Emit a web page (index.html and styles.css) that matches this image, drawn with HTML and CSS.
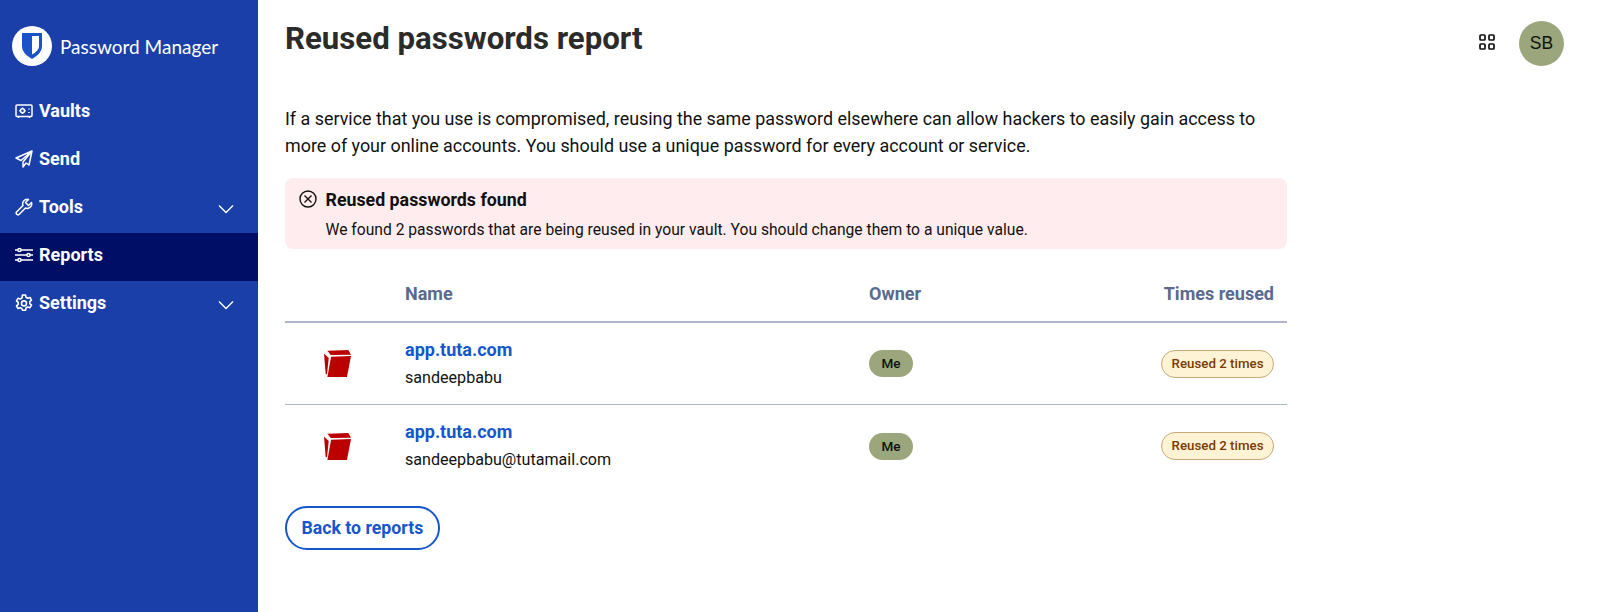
FILE: index.html
```html
<!DOCTYPE html>
<html lang="en">
<head>
    <meta charset="utf-8"/>
    <title>Reused passwords report</title>
    <link rel="stylesheet" href="styles.css">
</head>
<body>
<nav class="sidebar">
    <div class="sidebar__logo">
        <span class="logo_circle">
            <svg width="20" height="26" viewBox="0 0 20 26"><path d="M0 0h20v13c0 6-5 10-10 13C5 23 0 19 0 13z" fill="#1a52c8"/><path d="M10 3h7v10c0 4-3.500 6.500-7 8.500z" fill="#fff"/></svg>
        </span>
        <span class="logo_text">Password Manager</span>
    </div>
    <a class="nav_item">
        <span class="nav_label">
            <svg class="nav_icon" viewBox="0 0 18 18" fill="none" stroke="#fff" stroke-width="1.500"><rect x="1" y="3" width="16" height="11.500" rx="1"/><circle cx="7.500" cy="8.750" r="2"/><path d="M7.500 5.500v1.200M7.500 10.800V12M4.300 8.750h1.200M9.500 8.750h1.200M14 6.500v1M14 10v1M3.500 14.500V16M14.500 14.500V16"/></svg>
            Vaults
        </span>
    </a>
    <a class="nav_item">
        <span class="nav_label">
            <svg class="nav_icon" viewBox="0 0 18 18" fill="none" stroke="#fff" stroke-width="1.500"><path d="M17 1 1 8l5 2.500L17 1 8 12v5l3-4 3 2z" stroke-linejoin="round"/></svg>
            Send
        </span>
    </a>
    <a class="nav_item">
        <span class="nav_label">
            <svg class="nav_icon" viewBox="0 0 18 18" fill="none" stroke="#fff" stroke-width="1.500"><path d="M16.500 4.500 13.500 7.500 10.500 4.500 13.500 1.500a4.500 4.500 0 0 0-5.500 6L1.500 14a1.800 1.800 0 0 0 2.500 2.500L10.500 10a4.500 4.500 0 0 0 6-5.500z" stroke-linejoin="round"/></svg>
            Tools
        </span>
        <svg class="nav_chevron" viewBox="0 0 16 10" fill="none" stroke="#fff" stroke-width="1.400"><path d="m1 1.500 7 7 7-7"/></svg>
    </a>
    <a class="nav_item nav_item--active">
        <span class="nav_label">
            <svg class="nav_icon" viewBox="0 0 18 18" fill="none" stroke="#fff" stroke-width="1.500"><path d="M0 4h18M0 9h18M0 14h18"/><circle cx="4.500" cy="4" r="1.600" fill="#000e66"/><circle cx="13.500" cy="9" r="1.600" fill="#000e66"/><circle cx="4.500" cy="14" r="1.600" fill="#000e66"/></svg>
            Reports
        </span>
    </a>
    <a class="nav_item">
        <span class="nav_label">
            <svg class="nav_icon" viewBox="0 0 18 18" fill="none" stroke="#fff" stroke-width="1.600"><path d="M7.500 1h3l.5 2.200 1.800 1 2.200-.7 1.500 2.600-1.700 1.500v2l1.700 1.500-1.500 2.600-2.200-.7-1.800 1-.5 2.200h-3L7 14.800l-1.800-1-2.200.7-1.500-2.600L3.200 10.400v-2L1.500 6.900 3 4.300l2.200.7 1.800-1z" stroke-linejoin="round"/><circle cx="9" cy="9.400" r="2.500"/></svg>
            Settings
        </span>
        <svg class="nav_chevron" viewBox="0 0 16 10" fill="none" stroke="#fff" stroke-width="1.400"><path d="m1 1.500 7 7 7-7"/></svg>
    </a>
</nav>

<main class="content">
    <div class="topbar">
        <h1>Reused passwords report</h1>
        <div class="topbar__right">
            <svg class="apps_icon" width="16" height="16" viewBox="0 0 16 16" fill="none" stroke="#111" stroke-width="1.700"><rect x="1" y="1" width="5" height="5" rx=".8"/><rect x="10" y="1" width="5" height="5" rx=".8"/><rect x="1" y="10" width="5" height="5" rx=".8"/><rect x="10" y="10" width="5" height="5" rx=".8"/></svg>
            <span class="avatar">SB</span>
        </div>
    </div>

    <div class="report">
        <p class="intro">If a service that you use is compromised, reusing the same password elsewhere can allow hackers to easily gain access to more of your online accounts. You should use a unique password for every account or service.</p>

        <div class="callout">
            <svg class="callout__icon" width="18" height="18" viewBox="0 0 18 18" fill="none" stroke="#111" stroke-width="1.400"><circle cx="9" cy="9" r="8"/><path d="m5.500 5.500 7 7m0-7-7 7"/></svg>
            <div>
                <div class="callout__title">Reused passwords found</div>
                <div class="callout__text">We found 2 passwords that are being reused in your vault. You should change them to a unique value.</div>
            </div>
        </div>

        <div class="table">
            <div class="row row--head">
                <div></div>
                <div>Name</div>
                <div>Owner</div>
                <div class="cell_right">Times reused</div>
            </div>
            <div class="row">
                <div class="cell_icon">
                    <svg width="27" height="27" viewBox="0 0 80 80" fill="#bb0000"><path d="M10 2 72 0l8 14-60 1z"/><path d="M0 10l14 14-5 48-4 0z"/><path d="M21 20l59-2-12 62H10z"/></svg>
                </div>
                <div class="cell_name">
                    <a class="item_name">app.tuta.com</a>
                    <div class="item_user">sandeepbabu</div>
                </div>
                <div><span class="badge_owner">Me</span></div>
                <div class="cell_right"><span class="badge_reused">Reused 2 times</span></div>
            </div>
            <div class="row">
                <div class="cell_icon">
                    <svg width="27" height="27" viewBox="0 0 80 80" fill="#bb0000"><path d="M10 2 72 0l8 14-60 1z"/><path d="M0 10l14 14-5 48-4 0z"/><path d="M21 20l59-2-12 62H10z"/></svg>
                </div>
                <div class="cell_name">
                    <a class="item_name">app.tuta.com</a>
                    <div class="item_user">sandeepbabu@tutamail.com</div>
                </div>
                <div><span class="badge_owner">Me</span></div>
                <div class="cell_right"><span class="badge_reused">Reused 2 times</span></div>
            </div>
        </div>

        <a class="back_button">Back to reports</a>
    </div>
</main>
</body>
</html>
```

FILE: styles.css
```css
html {
    height: 100%;
}

body {
    height: 100%;
    margin: 0;
    overflow: hidden;
    display: flex;
    font-family: Roboto, "Liberation Sans", sans-serif;
    color: #111;
    background-color: #fff;
}

.sidebar {
    width: 258px;
    flex-shrink: 0;
    background-color: #1a3fa8;
    color: #fff;
}

.sidebar__logo {
    display: flex;
    align-items: center;
    gap: 8px;
    padding: 26px 12px 23px;
}

.logo_circle {
    width: 40px;
    height: 40px;
    border-radius: 50%;
    background-color: #fff;
    display: flex;
    align-items: center;
    justify-content: center;
}

.logo_text {
    font-family: Lato, sans-serif;
    font-size: 19px;
    font-weight: 400;
}

.nav_item {
    height: 48px;
    box-sizing: border-box;
    display: flex;
    align-items: center;
    justify-content: space-between;
    padding: 0 24px 0 15px;
    font-size: 18px;
    font-weight: 700;
}

.nav_item--active {
    background-color: #000e66;
}

.nav_label {
    display: flex;
    align-items: center;
    gap: 6px;
    padding-bottom: 5px;
}

.nav_icon {
    width: 18px;
    height: 18px;
}

.nav_chevron {
    width: 16px;
    height: 10px;
}

.content {
    flex-grow: 1;
    padding-left: 27px;
}

.topbar {
    display: flex;
    justify-content: space-between;
    align-items: flex-start;
    padding: 21px 36px 0 0;
}

h1 {
    margin: 0;
    color: #2b2b2b;
    font-size: 31.200px;
    line-height: 36px;
    font-weight: 700;
}

.topbar__right {
    display: flex;
    align-items: center;
    gap: 24px;
}

.apps_icon {
    margin-bottom: 3px;
}

.avatar {
    width: 45px;
    height: 45px;
    border-radius: 50%;
    background-color: #9ba67c;
    display: flex;
    align-items: center;
    justify-content: center;
    font-family: "Liberation Sans", sans-serif;
    font-size: 17.500px;
}

.report {
    width: 1002px;
}

.intro {
    margin: 0;
    padding-top: 39px;
    font-size: 17.900px;
    line-height: 27px;
}

.callout {
    margin-top: 19px;
    height: 71px;
    box-sizing: border-box;
    padding: 11px 14px;
    display: flex;
    gap: 8.500px;
    border-radius: 8px;
    background-color: #ffecef;
}

.callout__icon {
    margin-top: 1px;
}

.callout__title {
    font-size: 17.800px;
    line-height: 22px;
    font-weight: 700;
}

.callout__text {
    margin-top: 10px;
    font-size: 15.650px;
    line-height: 18px;
}

.row {
    display: grid;
    grid-template-columns: 120px 464px 1fr 220px;
    align-items: center;
    height: 82px;
    box-sizing: border-box;
    border-bottom: 1px solid #aeb6cc;
    font-size: 15px;
}

.row--head {
    height: 74px;
    align-items: end;
    padding-bottom: 17px;
    border-bottom: 2px solid #aeb6cc;
    color: #5a6a8f;
    font-size: 18px;
    font-weight: 700;
}

.row:last-child {
    border-bottom: none;
}

.cell_right {
    text-align: right;
    padding-right: 13px;
}

.cell_icon {
    display: flex;
    justify-content: center;
    padding-right: 16px;
}

.cell_name {
    margin-bottom: 1px;
}

.item_name {
    display: block;
    color: #1556cc;
    font-size: 18px;
    font-weight: 700;
    line-height: 22px;
}

.item_user {
    margin-top: 7px;
    font-size: 16.100px;
    line-height: 20px;
}

.badge_owner {
    display: inline-block;
    width: 44px;
    height: 27px;
    line-height: 27px;
    text-align: center;
    border-radius: 14px;
    background-color: #9ba67c;
    font-size: 13.500px;
    font-weight: 500;
}

.badge_reused {
    display: inline-block;
    padding: 0 9.500px;
    height: 26px;
    line-height: 26px;
    border: 1px solid #c8a877;
    border-radius: 14px;
    background-color: #fff3d6;
    color: #7a3b00;
    font-size: 13.300px;
    font-weight: 500;
}

.back_button {
    display: inline-block;
    margin-top: 19px;
    padding: 0 14.500px;
    height: 40px;
    line-height: 40px;
    border: 2px solid #1556cc;
    border-radius: 22px;
    color: #1556cc;
    font-size: 17.700px;
    font-weight: 700;
}
```
